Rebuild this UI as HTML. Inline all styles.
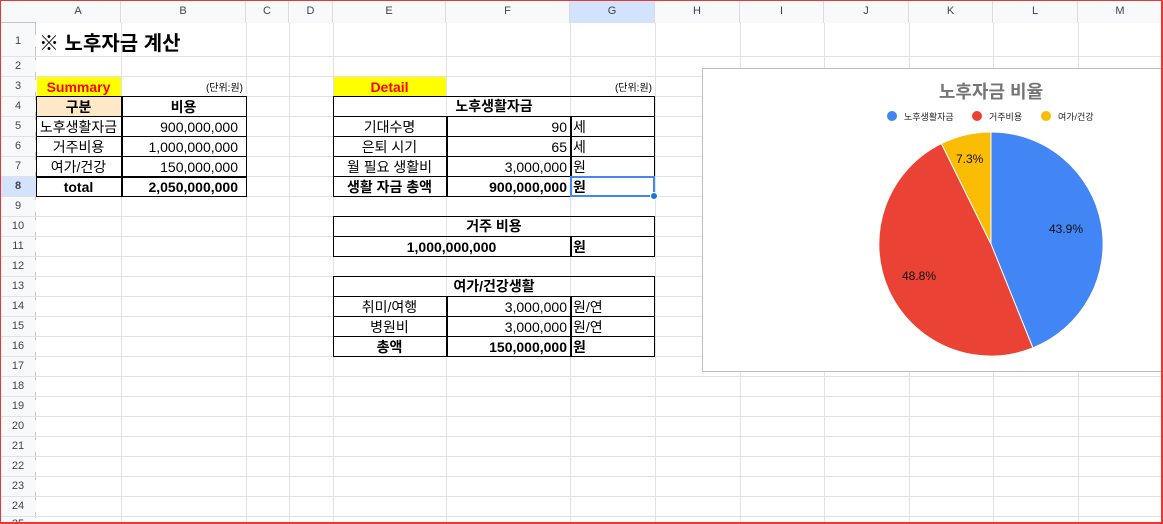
<!DOCTYPE html>
<html style="width:1163px;height:524px;overflow:hidden"><head><meta charset="utf-8"><style>
*{margin:0;padding:0;box-sizing:border-box}
body{width:1163px;height:524px;overflow:hidden;background:#fff;position:relative;font-family:"Liberation Sans","Noto Sans CJK KR",sans-serif;color:#000}
.a{position:absolute}
.v{position:absolute;top:23px;width:1px;height:501px;background:#e2e2e2}
.h{position:absolute;left:0;height:1px;width:1163px;background:#e2e2e2}
.ch{position:absolute;top:0;height:23px;line-height:23px;font-size:11px;color:#444;text-align:center;background:#f8f9fa;border-right:1px solid #dadce0}
.rh{position:absolute;left:0;width:36px;font-size:11px;color:#444;text-align:center;background:#f8f9fa}
.c{position:absolute;height:20px;line-height:20px;font-size:14px;white-space:nowrap;padding:0 3px}
.r{text-align:right}.m{text-align:center}.b{font-weight:bold}
.bx{position:absolute;border:1.5px solid #000}
</style></head><body>
<div class="a" style="left:0;top:23px;width:36px;height:501px;background:#f8f9fa;border-right:1px solid #c4c7c5"></div>
<div class="a" style="left:0;top:0;width:1163px;height:23px;background:#f8f9fa;border-bottom:1px solid #c4c7c5"></div>
<div class="ch" style="left:36px;width:85px">A</div>
<div class="ch" style="left:121px;width:125px">B</div>
<div class="ch" style="left:246px;width:43px">C</div>
<div class="ch" style="left:289px;width:44px">D</div>
<div class="ch" style="left:333px;width:113px">E</div>
<div class="ch" style="left:446px;width:124px">F</div>
<div class="ch" style="left:570px;width:85px;background:#d3e3fd">G</div>
<div class="ch" style="left:655px;width:85px">H</div>
<div class="ch" style="left:740px;width:84px">I</div>
<div class="ch" style="left:824px;width:85px">J</div>
<div class="ch" style="left:909px;width:84px">K</div>
<div class="ch" style="left:993px;width:85px">L</div>
<div class="ch" style="left:1078px;width:85px">M</div>
<div class="v" style="left:121px"></div><div class="v" style="left:246px"></div><div class="v" style="left:289px"></div><div class="v" style="left:333px"></div><div class="v" style="left:446px"></div><div class="v" style="left:570px"></div><div class="v" style="left:655px"></div><div class="v" style="left:740px"></div><div class="v" style="left:824px"></div><div class="v" style="left:909px"></div><div class="v" style="left:993px"></div><div class="v" style="left:1078px"></div>
<div class="h" style="top:56px"></div><div class="h" style="top:76px"></div><div class="h" style="top:96px"></div><div class="h" style="top:116px"></div><div class="h" style="top:136px"></div><div class="h" style="top:156px"></div><div class="h" style="top:176px"></div><div class="h" style="top:196px"></div><div class="h" style="top:216px"></div><div class="h" style="top:236px"></div><div class="h" style="top:256px"></div><div class="h" style="top:276px"></div><div class="h" style="top:296px"></div><div class="h" style="top:316px"></div><div class="h" style="top:336px"></div><div class="h" style="top:356px"></div><div class="h" style="top:376px"></div><div class="h" style="top:396px"></div><div class="h" style="top:416px"></div><div class="h" style="top:436px"></div><div class="h" style="top:456px"></div><div class="h" style="top:476px"></div><div class="h" style="top:496px"></div><div class="h" style="top:516px"></div>
<div class="rh" style="top:35px">1</div><div class="rh" style="top:60px">2</div><div class="rh" style="top:80px">3</div><div class="rh" style="top:100px">4</div><div class="rh" style="top:120px">5</div><div class="rh" style="top:140px">6</div><div class="rh" style="top:160px">7</div>
<div class="a" style="left:0;top:177px;width:36px;height:19px;background:#d3e3fd"></div><div class="rh" style="top:180px;background:none;font-weight:bold">8</div>
<div class="rh" style="top:200px">9</div><div class="rh" style="top:220px">10</div><div class="rh" style="top:240px">11</div><div class="rh" style="top:260px">12</div><div class="rh" style="top:280px">13</div><div class="rh" style="top:300px">14</div><div class="rh" style="top:320px">15</div><div class="rh" style="top:340px">16</div><div class="rh" style="top:360px">17</div><div class="rh" style="top:380px">18</div><div class="rh" style="top:400px">19</div><div class="rh" style="top:420px">20</div><div class="rh" style="top:440px">21</div><div class="rh" style="top:460px">22</div><div class="rh" style="top:480px">23</div><div class="rh" style="top:500px">24</div><div class="rh" style="top:518px">25</div>

<div class="c b" style="left:36px;top:31px;font-size:20px;height:26px;line-height:26px">※ 노후자금 계산</div>

<div class="a" style="left:37px;top:77px;width:84px;height:19px;background:#ffff00"></div>
<div class="c m b" style="left:36px;top:77px;width:85px;color:#ff0000">Summary</div>
<div class="c r" style="left:121px;top:79px;width:125px;font-size:10px">(단위:원)</div>
<div class="a" style="left:37px;top:97px;width:84px;height:20px;background:#fde9c8"></div>
<div class="bx" style="left:36px;top:96px;width:211px;height:21px"></div>
<div class="bx" style="left:36px;top:116px;width:211px;height:81px"></div>
<div class="a" style="left:121px;top:96px;width:1.5px;height:101px;background:#000"></div>
<div class="a" style="left:36px;top:136px;width:211px;height:1px;background:#000"></div>
<div class="a" style="left:36px;top:156px;width:211px;height:1px;background:#000"></div>
<div class="a" style="left:36px;top:176px;width:211px;height:1.5px;background:#000"></div>
<div class="c m b" style="left:36px;top:97px;width:85px">구분</div>
<div class="c m b" style="left:121px;top:97px;width:125px">비용</div>
<div class="c m" style="left:36px;top:117px;width:85px;padding:0">노후생활자금</div>
<div class="c r" style="left:121px;top:117px;width:125px;padding-right:8px">900,000,000</div>
<div class="c m" style="left:36px;top:137px;width:85px">거주비용</div>
<div class="c r" style="left:121px;top:137px;width:125px;padding-right:8px">1,000,000,000</div>
<div class="c m" style="left:36px;top:157px;width:85px">여가/건강</div>
<div class="c r" style="left:121px;top:157px;width:125px;padding-right:8px">150,000,000</div>
<div class="c m b" style="left:36px;top:177px;width:85px">total</div>
<div class="c r b" style="left:121px;top:177px;width:125px;padding-right:8px">2,050,000,000</div>

<div class="a" style="left:334px;top:77px;width:112px;height:19px;background:#ffff00"></div>
<div class="c m b" style="left:333px;top:77px;width:113px;color:#ff0000">Detail</div>
<div class="c r" style="left:570px;top:79px;width:85px;font-size:10px">(단위:원)</div>
<div class="bx" style="left:333px;top:96px;width:322px;height:21px"></div>
<div class="c m b" style="left:333px;top:96px;width:322px">노후생활자금</div>
<div class="bx" style="left:333px;top:116px;width:322px;height:81px"></div>
<div class="a" style="left:446px;top:116px;width:1.5px;height:81px;background:#000"></div>
<div class="a" style="left:570px;top:116px;width:1.5px;height:81px;background:#000"></div>
<div class="a" style="left:333px;top:136px;width:322px;height:1px;background:#000"></div>
<div class="a" style="left:333px;top:156px;width:322px;height:1px;background:#000"></div>
<div class="a" style="left:333px;top:176px;width:322px;height:1px;background:#000"></div>
<div class="c m" style="left:333px;top:117px;width:113px">기대수명</div><div class="c r" style="left:446px;top:117px;width:124px">90</div><div class="c" style="left:570px;top:117px">세</div>
<div class="c m" style="left:333px;top:137px;width:113px">은퇴 시기</div><div class="c r" style="left:446px;top:137px;width:124px">65</div><div class="c" style="left:570px;top:137px">세</div>
<div class="c m" style="left:333px;top:157px;width:113px">월 필요 생활비</div><div class="c r" style="left:446px;top:157px;width:124px">3,000,000</div><div class="c" style="left:570px;top:157px">원</div>
<div class="c m b" style="left:333px;top:177px;width:113px">생활 자금 총액</div><div class="c r b" style="left:446px;top:177px;width:124px">900,000,000</div><div class="c b" style="left:570px;top:177px">원</div>
<div class="a" style="left:570px;top:176px;width:85px;height:21px;border:2px solid #4285f4"></div>
<div class="a" style="left:650px;top:192px;width:8px;height:8px;border-radius:50%;background:#1a73e8;border:1px solid #fff"></div>

<div class="bx" style="left:333px;top:216px;width:322px;height:21px"></div>
<div class="c m b" style="left:333px;top:216px;width:322px">거주 비용</div>
<div class="bx" style="left:333px;top:236px;width:322px;height:21px"></div>
<div class="a" style="left:570px;top:236px;width:1.5px;height:21px;background:#000"></div>
<div class="c m b" style="left:333px;top:237px;width:237px">1,000,000,000</div><div class="c b" style="left:570px;top:237px">원</div>

<div class="bx" style="left:333px;top:276px;width:322px;height:21px"></div>
<div class="c m b" style="left:333px;top:276px;width:322px">여가/건강생활</div>
<div class="bx" style="left:333px;top:296px;width:322px;height:61px"></div>
<div class="a" style="left:446px;top:296px;width:1.5px;height:61px;background:#000"></div>
<div class="a" style="left:570px;top:296px;width:1.5px;height:61px;background:#000"></div>
<div class="a" style="left:333px;top:316px;width:322px;height:1px;background:#000"></div>
<div class="a" style="left:333px;top:336px;width:322px;height:1px;background:#000"></div>
<div class="c m" style="left:333px;top:297px;width:113px">취미/여행</div><div class="c r" style="left:446px;top:297px;width:124px">3,000,000</div><div class="c" style="left:570px;top:297px">원/연</div>
<div class="c m" style="left:333px;top:317px;width:113px">병원비</div><div class="c r" style="left:446px;top:317px;width:124px">3,000,000</div><div class="c" style="left:570px;top:317px">원/연</div>
<div class="c m b" style="left:333px;top:337px;width:113px">총액</div><div class="c r b" style="left:446px;top:337px;width:124px">150,000,000</div><div class="c b" style="left:570px;top:337px">원</div>

<div class="a" style="left:702px;top:68px;width:461px;height:304px;background:#fff;border:1px solid #bdbdbd"></div>
<div class="a" style="left:702px;top:78px;width:578px;text-align:center;font-size:18px;font-weight:bold;color:#757575">노후자금 비율</div>
<svg class="a" style="left:0;top:0" width="1163" height="524">
<circle cx="892" cy="116" r="5" fill="#4285f4"/><text x="904" y="120" font-size="9" fill="#222" font-family="Liberation Sans,Noto Sans CJK KR,sans-serif">노후생활자금</text>
<circle cx="977" cy="116" r="5" fill="#ea4335"/><text x="989" y="120" font-size="9" fill="#222" font-family="Liberation Sans,Noto Sans CJK KR,sans-serif">거주비용</text>
<circle cx="1046" cy="116" r="5" fill="#fbbc04"/><text x="1058" y="120" font-size="9" fill="#222" font-family="Liberation Sans,Noto Sans CJK KR,sans-serif">여가/건강</text>
<path d="M991,244 L991,132 A112,112 0 0 1 1032.9,347.9 Z" fill="#4285f4" stroke="#fff" stroke-width="1"/>
<path d="M991,244 L1032.9,347.9 A112,112 0 0 1 941.4,143.6 Z" fill="#ea4335" stroke="#fff" stroke-width="1"/>
<path d="M991,244 L941.4,143.6 A112,112 0 0 1 991,132 Z" fill="#fbbc04" stroke="#fff" stroke-width="1"/>
<g font-family="Liberation Sans,sans-serif" font-size="12" fill="#111"><text x="1049" y="233">43.9%</text><text x="902" y="280">48.8%</text><text x="956" y="163">7.3%</text></g>
</svg>
<div class="a" style="left:0;top:0;width:1163px;height:524px;border:1px solid #e53935;border-right-width:2px;border-bottom-width:2px;pointer-events:none"></div>
</body></html>
